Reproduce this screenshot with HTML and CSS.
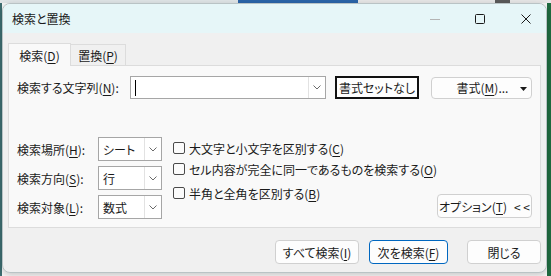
FILE: index.html
```html
<!DOCTYPE html>
<html lang="ja">
<head>
    <meta charset="UTF-8">
    <title>検索と置換</title>
    <link rel="stylesheet" href="styles.css">
</head>
<body>
    <div class="dialog">
        <div class="titlebar">
            <span class="title">検索と置換</span>
            <div class="caption">
                <span class="cap-btn cap-min">
                    <svg width="10" height="10" viewBox="0 0 10 10"><line x1="0" y1="5.5" x2="10" y2="5.5" stroke="#b4b4b4" stroke-width="1"/></svg>
                </span>
                <span class="cap-btn cap-max">
                    <svg width="10" height="10" viewBox="0 0 10 10"><rect x="0.5" y="0.5" width="9" height="9" rx="1" fill="none" stroke="#1a1a1a" stroke-width="1"/></svg>
                </span>
                <span class="cap-btn cap-close">
                    <svg width="10" height="10" viewBox="0 0 10 10"><path d="M0.5 0.5 L9.5 9.5 M9.5 0.5 L0.5 9.5" stroke="#1a1a1a" stroke-width="1"/></svg>
                </span>
            </div>
        </div>

        <div class="content">
            <div class="tabs">
                <div class="tab active">検索(<u>D</u>)</div>
                <div class="tab">置換(<u>P</u>)</div>
            </div>

            <div class="panel">
                <div class="find-row">
                    <label class="find-label">検索する文字列(<u>N</u>):</label>
                    <div class="combo find-input">
                        <span class="combo-text"><span class="caret"></span></span>
                        <span class="combo-arrow">
                            <svg width="8" height="5" viewBox="0 0 8 5"><polyline points="0.5,0.5 4,4 7.5,0.5" fill="none" stroke="#6a6a6a" stroke-width="1"/></svg>
                        </span>
                    </div>
                    <button class="btn btn-noformat">書式セットなし</button>
                    <button class="btn btn-format">
                        <span class="btn-format-text">書式(<u>M</u>)...</span>
                        <svg width="7" height="4" viewBox="0 0 7 4"><polygon points="0,0 7,0 3.5,4" fill="#1a1a1a"/></svg>
                    </button>
                </div>

                <div class="options">
                    <div class="scope-grid">
                        <label>検索場所(<u>H</u>):</label>
                        <div class="combo select">
                            <span class="combo-text">シート</span>
                            <span class="combo-arrow">
                                <svg width="8" height="5" viewBox="0 0 8 5"><polyline points="0.5,0.5 4,4 7.5,0.5" fill="none" stroke="#6a6a6a" stroke-width="1"/></svg>
                            </span>
                        </div>
                        <label>検索方向(<u>S</u>):</label>
                        <div class="combo select">
                            <span class="combo-text">行</span>
                            <span class="combo-arrow">
                                <svg width="8" height="5" viewBox="0 0 8 5"><polyline points="0.5,0.5 4,4 7.5,0.5" fill="none" stroke="#6a6a6a" stroke-width="1"/></svg>
                            </span>
                        </div>
                        <label>検索対象(<u>L</u>):</label>
                        <div class="combo select">
                            <span class="combo-text">数式</span>
                            <span class="combo-arrow">
                                <svg width="8" height="5" viewBox="0 0 8 5"><polyline points="0.5,0.5 4,4 7.5,0.5" fill="none" stroke="#6a6a6a" stroke-width="1"/></svg>
                            </span>
                        </div>
                    </div>

                    <div class="checks">
                        <div class="check"><span class="box"></span>大文字と小文字を区別する(<u>C</u>)</div>
                        <div class="check"><span class="box"></span>セル内容が完全に同一であるものを検索する(<u>O</u>)</div>
                        <div class="check check-last"><span class="box"></span>半角と全角を区別する(<u>B</u>)</div>
                    </div>

                    <button class="btn btn-options">オプション(<u>T</u>)<span class="chevrons">&lt; &lt;</span></button>
                </div>
            </div>

            <div class="actions">
                <button class="btn btn-all">すべて検索(<u>I</u>)</button>
                <button class="btn btn-next">次を検索(<u>F</u>)</button>
                <button class="btn btn-close">閉じる</button>
            </div>
        </div>
    </div>
</body>
</html>
```

FILE: styles.css
```css
html {
    height: 100%;
}
body {
    margin: 0;
    height: 100%;
    overflow: hidden;
    font-family: "Noto Sans CJK JP", "Noto Sans", sans-serif;
    font-size: 12px;
    font-feature-settings: "palt";
    white-space: nowrap;
    color: #1a1a1a;
    background:
        linear-gradient(to right, #dfe4e6 0 238px, #2b64a8 238px 358px, #e6e6e6 358px 495px, #5a5a5a 495px 510px, #e6e6e6 510px) top left / 100% 3px no-repeat,
        linear-gradient(to right, #3d6d70 0 2px, transparent 2px 547px, #1f6b40 547px),
        #f7f7f7;
}
.dialog {
    box-sizing: border-box;
    margin: 3px 0 0 2px;
    width: 545px;
    height: 270px;
    border: 1px solid #b9c3c5;
    border-radius: 8px;
    overflow: hidden;
    background: #f0f0f0;
    display: flex;
    flex-direction: column;
    box-shadow: 0 2px 6px rgba(0, 0, 0, 0.2);
}
.titlebar {
    height: 29px;
    flex: none;
    display: flex;
    align-items: center;
    background: #e6f6f8;
    padding-left: 9px;
}
.title {
    flex: 1;
    line-height: 16px;
}
.caption {
    display: flex;
    height: 100%;
}
.cap-btn {
    display: flex;
    align-items: center;
    justify-content: center;
    box-sizing: border-box;
}
.cap-min {
    width: 45px;
    padding-right: 6px;
    padding-top: 1px;
}
.cap-max {
    width: 46px;
    padding-right: 6px;
}
.cap-close {
    width: 40px;
}
.cap-btn svg {
    display: block;
}

.content {
    flex: 1;
    display: flex;
    flex-direction: column;
    padding: 9px 5px 0 5px;
}
.tabs {
    display: flex;
    align-items: flex-end;
    height: 23px;
}
.tab {
    box-sizing: border-box;
    height: 21px;
    border: 1px solid #dcdcdc;
    border-bottom: none;
    background: #f0f0f0;
    display: flex;
    align-items: center;
    justify-content: center;
    padding-top: 1px;
}
.tab.active {
    height: 23px;
    width: 63px;
    background: #f9f9f9;
    padding-top: 0;
    margin-bottom: -1px;
    position: relative;
    z-index: 1;
}
.tab.active + .tab {
    border-left: none;
    width: 55px;
}
.panel {
    box-sizing: border-box;
    height: 163px;
    border: 1px solid #dcdcdc;
    background: #f9f9f9;
    padding: 10px 8px 8px 8px;
    display: flex;
    flex-direction: column;
}

.find-row {
    display: flex;
    align-items: center;
    height: 23px;
}
.find-label {
    width: 113px;
    flex: none;
}
.combo {
    box-sizing: border-box;
    display: flex;
    background: #ffffff;
    border: 1px solid #a6a6a6;
}
.combo-text {
    flex: 1;
    display: flex;
    align-items: center;
    padding-left: 4px;
}
.combo-arrow {
    width: 16px;
    border-left: 1px solid #e2e2e2;
    display: flex;
    align-items: center;
    justify-content: center;
}
.combo-arrow svg {
    display: block;
}
.find-input {
    width: 196px;
    height: 23px;
}
.caret {
    width: 1px;
    height: 16px;
    background: #000;
}
.btn {
    box-sizing: border-box;
    font-family: inherit;
    font-size: 12px;
    font-feature-settings: "palt";
    white-space: nowrap;
    color: #1a1a1a;
    background: #fdfdfd;
    border: 1px solid #d0d0d0;
    border-radius: 4px;
    padding: 0;
    display: flex;
    align-items: center;
    justify-content: center;
    cursor: pointer;
}
.btn-noformat {
    margin-left: 9px;
    width: 84px;
    height: 23px;
    border: 2px solid #111;
    border-radius: 0;
    background: #fefefe;
}
.btn-format {
    margin-left: 12px;
    width: 101px;
    height: 22px;
    position: relative;
}
.btn-format-text {
    margin-left: 2px;
}
.btn-format svg {
    position: absolute;
    right: 4px;
    top: 9px;
}

.options {
    margin-top: auto;
    display: flex;
    align-items: flex-start;
}
.scope-grid {
    display: grid;
    grid-template-columns: 81px 64px;
    row-gap: 5px;
    align-items: center;
}
.select {
    height: 24px;
}
.checks {
    margin-left: 11px;
    padding-top: 5px;
    display: flex;
    flex-direction: column;
}
.check {
    display: flex;
    align-items: center;
    height: 12px;
}
.check + .check {
    margin-top: 9px;
}
.check.check-last {
    margin-top: 12px;
}
.box {
    box-sizing: border-box;
    width: 12px;
    height: 12px;
    border: 1px solid #4a4a4a;
    border-radius: 2px;
    background: #fbfbfb;
    margin-right: 4px;
    flex: none;
}
.btn-options {
    margin-left: auto;
    align-self: flex-end;
    width: 100px;
    height: 24px;
    margin-bottom: 1px;
}
.chevrons {
    margin-left: 7px;
}

.actions {
    display: flex;
    justify-content: flex-end;
    margin-top: 12px;
}
.actions .btn {
    height: 24px;
}
.btn-all {
    width: 84px;
}
.btn-next {
    width: 79px;
    margin-left: 10px;
    border-color: #0067c0;
}
.btn-close {
    width: 74px;
    margin-left: 19px;
}
u {
    text-decoration-thickness: 1px;
    text-underline-offset: 2px;
}
```
